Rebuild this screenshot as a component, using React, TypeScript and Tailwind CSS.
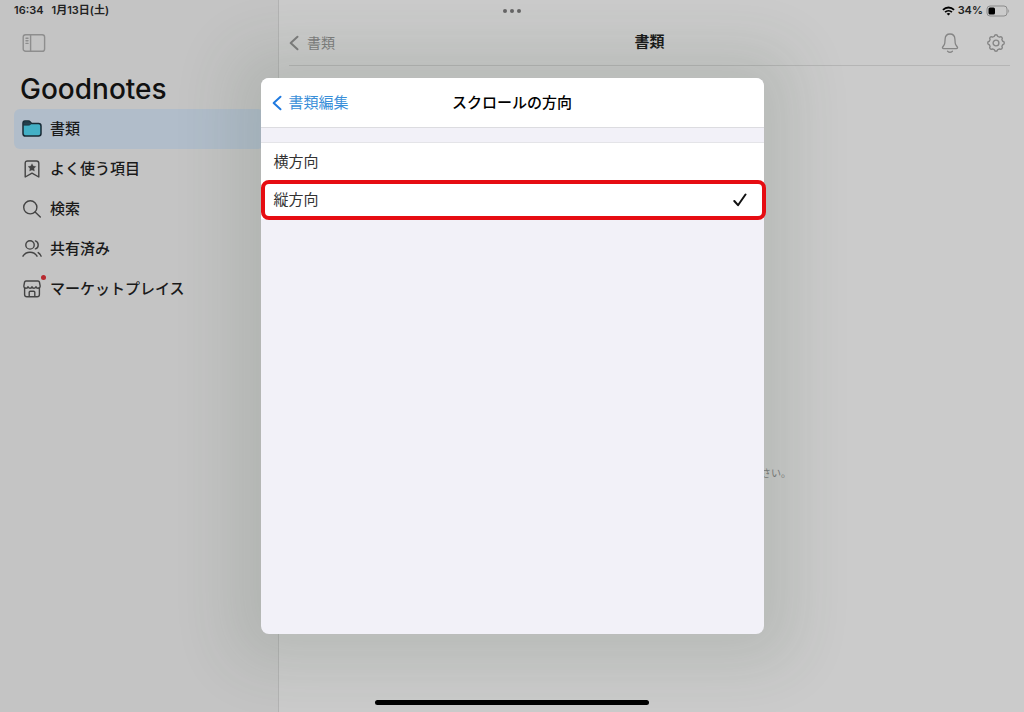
import React, { useState } from 'react'

type IconProps = { className?: string };

const SidebarIcon = ({ className }: IconProps) => (
    <svg viewBox="0 0 24 20" className={className} fill="none" stroke="currentColor" strokeWidth="1.4" strokeLinecap="round">
        <rect x="1.2" y="1.7" width="21.4" height="16.6" rx="2.4" />
        <path d="M8.6 2v16M4 5.2h2M4 7.8h2M4 10.4h2" />
    </svg>
);

const FolderIcon = ({ className }: IconProps) => (
    <svg viewBox="0 0 20 20" className={className} fill="#43b0c6" stroke="#182a35" strokeWidth="1.500" strokeLinejoin="round">
        <path d="M1 4.200C1 2.600 1.700 2 3 2h3.400c.8 0 1.300.3 1.800.9L9.600 4.600H16.600c1.700 0 2.400.8 2.400 2.300v7.600c0 1.700-.8 2.500-2.500 2.500h-13C1.800 17 1 16.200 1 14.500z" />
        <path d="M1.500 6.200h5.200c.7 0 1.200-.2 1.700-.6l1-.9-1.500-1.900H3c-1 0-1.500.5-1.500 1.500z" fill="#26414e" strokeWidth="0.6" />
    </svg>
);

const BookmarkIcon = ({ className }: IconProps) => (
    <svg viewBox="0 0 20 20" className={className} fill="none" stroke="currentColor" strokeWidth="1.4" strokeLinejoin="round">
        <path d="M3.200 18V4.200C3.200 2.700 4 2 5.500 2h9c1.500 0 2.300.7 2.300 2.200V18L10 14.200z" />
        <path d="M10 4.700l1.200 2.400 2.700.4-1.900 1.900.4 2.700L10 10.900l-2.400 1.200.4-2.700-1.900-1.900 2.700-.4z" fill="currentColor" strokeWidth="0.3" />
    </svg>
);

const SearchIcon = ({ className }: IconProps) => (
    <svg viewBox="0 0 20 20" className={className} fill="none" stroke="currentColor" strokeWidth="1.4" strokeLinecap="round">
        <circle cx="8.300" cy="8.300" r="6.600" />
        <path d="M13.100 13.100l5.200 5" />
    </svg>
);

const PeopleIcon = ({ className }: IconProps) => (
    <svg viewBox="0 0 20 20" className={className} fill="none" stroke="currentColor" strokeWidth="1.4" strokeLinecap="round">
        <circle cx="8" cy="5.900" r="4.200" />
        <path d="M1 17.200c1.500-2.600 4.100-3.900 7-3.900s5.500 1.300 7 3.900" />
        <path d="M13.400 1.900c1.800.5 2.800 2.100 2.800 4s-1 3.500-2.800 4M16.200 13.600c1.300.8 2.200 2 2.900 3.600" />
    </svg>
);

const StoreIcon = ({ className }: IconProps) => (
    <svg viewBox="0 0 20 20" className={className} fill="none" stroke="currentColor" strokeWidth="1.400" strokeLinejoin="round">
        <path d="M2.600 8.600v6.900c0 1.600.8 2.300 2.300 2.300h10.200c1.500 0 2.300-.7 2.300-2.300V8.600" />
        <path d="M4 2h12c.8 0 1.200.3 1.400 1l.7 3.600c.3 1.500-.7 2.600-2.100 2.600-1.100 0-1.900-.7-2-1.600-.2 1-1 1.600-2 1.600s-1.900-.6-2-1.600c-.1 1-1 1.600-2 1.600s-1.800-.6-2-1.600c-.1.900-.9 1.600-2 1.600-1.400 0-2.400-1.100-2.100-2.600L2.600 3c.2-.7.600-1 1.400-1z" />
        <path d="M7.200 17.600v-4.300c0-.7.400-1.100 1.100-1.100h3.400c.7 0 1.100.4 1.100 1.100v4.300" />
    </svg>
);

const BellIcon = ({ className }: IconProps) => (
    <svg viewBox="0 0 20 22" className={className} fill="none" stroke="currentColor" strokeWidth="1.300" strokeLinecap="round" strokeLinejoin="round">
        <path d="M10 2C7 2 5.200 4.200 5.100 7.200L4.800 11c-.1 1.200-.6 2-1.400 3-.7.900-1 1.300-1 1.800 0 .6.400.8 1.100.8h13c.7 0 1.100-.2 1.100-.8 0-.5-.3-.9-1-1.800-.8-1-1.300-1.800-1.400-3l-.3-3.800C14.800 4.200 13 2 10 2z" />
        <path d="M7.600 19.200c1.300 1.100 3.500 1.100 4.800 0" />
    </svg>
);

const GearIcon = ({ className }: IconProps) => (
    <svg viewBox="0 0 20 20" className={className} fill="none" stroke="currentColor" strokeWidth="1.400" strokeLinejoin="round">
        <path d="M8.300 3.300Q8.600 1.700 10 1.700t1.700 1.600q.9.300 1.700.8 1.400-.9 2.400.1t.1 2.400q.5.800.8 1.700 1.600.3 1.600 1.700t-1.600 1.700q-.3.900-.8 1.700.9 1.400-.1 2.400t-2.400.1q-.8.500-1.700.8-.3 1.600-1.700 1.600t-1.700-1.600q-.9-.3-1.700-.8-1.400.9-2.400-.1t-.1-2.400q-.5-.8-.8-1.700-1.600-.3-1.600-1.700t1.600-1.700q.3-.9.8-1.700-.9-1.400.1-2.400t2.400-.1q.8-.5 1.700-.8z" />
        <circle cx="10" cy="10" r="2.900" />
    </svg>
);

const ChevronIcon = ({ className }: IconProps) => (
    <svg viewBox="0 0 12 18" className={className} fill="none" stroke="currentColor" strokeWidth="2.400" strokeLinecap="round" strokeLinejoin="round">
        <path d="M10.200 1.500L2 9l8.200 7.500" />
    </svg>
);

const CheckIcon = ({ className }: IconProps) => (
    <svg viewBox="0 0 14 14" className={className} fill="none" stroke="currentColor" strokeWidth="2" strokeLinecap="round" strokeLinejoin="round">
        <path d="M1.300 8l3.700 4.200L12.500 1.500" />
    </svg>
);

const WifiIcon = ({ className }: IconProps) => (
    <svg viewBox="0 0 14 10" className={className} fill="none" stroke="currentColor" strokeWidth="1.900">
        <path d="M1 3.700C4.400.4 9.600.4 13 3.700M3.300 6.300c2.100-2 5.300-2 7.400 0" />
        <path d="M7 9.800L5 7.900c1-1 3-1 4 0z" fill="currentColor" stroke="none" />
    </svg>
);

const BatteryIcon = ({ className }: IconProps) => (
    <svg viewBox="0 0 24 12" className={className} fill="none">
        <rect x="1" y="1" width="20" height="10" rx="3" stroke="#8b8b8b" />
        <path d="M22.400 4.200c1 .4 1 3.200 0 3.600z" fill="#8b8b8b" />
        <rect x="2.500" y="2.500" width="6.500" height="7" rx="1.500" fill="#000" />
    </svg>
);

const navItems = [
    { label: '書類', Icon: FolderIcon },
    { label: 'よく使う項目', Icon: BookmarkIcon },
    { label: '検索', Icon: SearchIcon },
    { label: '共有済み', Icon: PeopleIcon },
    { label: 'マーケットプレイス', Icon: StoreIcon, badge: true },
];

const directions = ['横方向', '縦方向'];

const StatusBar = () => (
    <div className="absolute inset-x-0 top-0 h-[21px] px-[14px] grid grid-cols-3 items-center text-[11px] font-semibold text-[#222222]">
        <div className="flex gap-2">
            <span>16:34</span>
            <span>1月13日(土)</span>
        </div>
        <div className="flex justify-center gap-[3px]">
            <span className="size-1 rounded-full bg-[#666666]"></span>
            <span className="size-1 rounded-full bg-[#666666]"></span>
            <span className="size-1 rounded-full bg-[#666666]"></span>
        </div>
        <div className="flex items-center justify-end gap-[3px]">
            <WifiIcon className="w-[13px] h-[10px] text-black" />
            <span>34%</span>
            <BatteryIcon className="w-6 h-3" />
        </div>
    </div>
);

const App = () => {
    const [section, setSection] = useState('書類');
    const [direction, setDirection] = useState('縦方向');

    return (
        <div className="relative min-h-screen flex overflow-hidden bg-[#cbcbcb] font-[Inter,'Noto_Sans_CJK_JP',sans-serif] text-[#1a1a1a]">
            <aside className="w-[279px] shrink-0 bg-[#c4c4c4] border-r border-[#b3b3b3] px-[14px] pt-[33px]">
                <button type="button" aria-label="サイドバー" className="block ml-2 text-[#8e8e8e]">
                    <SidebarIcon className="w-6 h-5" />
                </button>
                <h1 className="mt-4 ml-[6px] text-[28px] leading-10 font-medium text-[#111111]">Goodnotes</h1>
                <nav className="flex flex-col">
                    {navItems.map(({ label, Icon, badge }) => (
                        <button
                            key={label}
                            type="button"
                            onClick={() => setSection(label)}
                            className={`h-10 px-2 flex items-center gap-2 rounded-md text-[15px] font-medium ${section === label ? "bg-[#b1bdca]" : ""}`}>
                            <span className="relative text-[#444444]">
                                <Icon className="size-5" />
                                {badge && <span className="absolute -right-1 -top-1 size-[5px] rounded-full bg-[#b8292f]"></span>}
                            </span>
                            {label}
                        </button>
                    ))}
                </nav>
            </aside>

            <main className="flex-1 flex flex-col pl-[10px] pr-[14px]">
                <header className="h-[66px] pt-5 grid grid-cols-3 items-center border-b border-[#b5b5b5]">
                    <button type="button" className="flex items-center gap-2 text-sm text-[#7d7d7d]">
                        <ChevronIcon className="w-[10px] h-4" />
                        書類
                    </button>
                    <h2 className="text-center text-[15px] font-bold">書類</h2>
                    <div className="flex items-center justify-end gap-[26px] pr-1 text-[#858585]">
                        <button type="button" aria-label="通知"><BellIcon className="w-5 h-[22px]" /></button>
                        <button type="button" aria-label="設定"><GearIcon className="size-5" /></button>
                    </div>
                </header>
                <div className="flex-1 flex items-center justify-end pt-[169px] pr-[219px]">
                    <p className="text-[10px] text-[#7c7c7c]">ださい。</p>
                </div>
            </main>

            <StatusBar />

            <div className="absolute inset-0 flex items-center justify-center">
                <section className="w-[503px] h-[78%] flex flex-col rounded-lg bg-[#f2f1f8] shadow-[0_0_60px_30px_rgba(50,75,50,0.12)]">
                    <header className="h-[50px] px-[11px] grid grid-cols-[1fr_auto_1fr] items-center rounded-t-lg bg-white border-b border-[#dcdce0]">
                        <button type="button" className="flex items-center gap-[7px] text-[15px] text-[#3a8fd9]">
                            <ChevronIcon className="w-[10px] h-4 text-[#1f7ae0]" />
                            書類編集
                        </button>
                        <h2 className="text-[15px] font-medium text-black">スクロールの方向</h2>
                    </header>
                    <ul className="mt-[14px] bg-white border-t border-[#e4e4e8]">
                        {directions.map((item) => (
                            <li key={item} className="relative">
                                <button
                                    type="button"
                                    onClick={() => setDirection(item)}
                                    className="w-full h-[38px] pl-[13px] pr-[17px] flex items-center justify-between text-[15px] text-[#333333]">
                                    {item}
                                    {direction === item && <CheckIcon className="size-[14px] text-[#111111]" />}
                                </button>
                                {direction === item && (
                                    <span className="absolute -inset-y-px left-0 -right-[2px] rounded-lg border-4 border-[#e60d12] pointer-events-none"></span>
                                )}
                            </li>
                        ))}
                    </ul>
                </section>
            </div>

            <div className="absolute inset-x-0 bottom-[7px] flex justify-center">
                <div className="w-[274px] h-[5px] rounded-full bg-black"></div>
            </div>
        </div>
    )
}

export default App
